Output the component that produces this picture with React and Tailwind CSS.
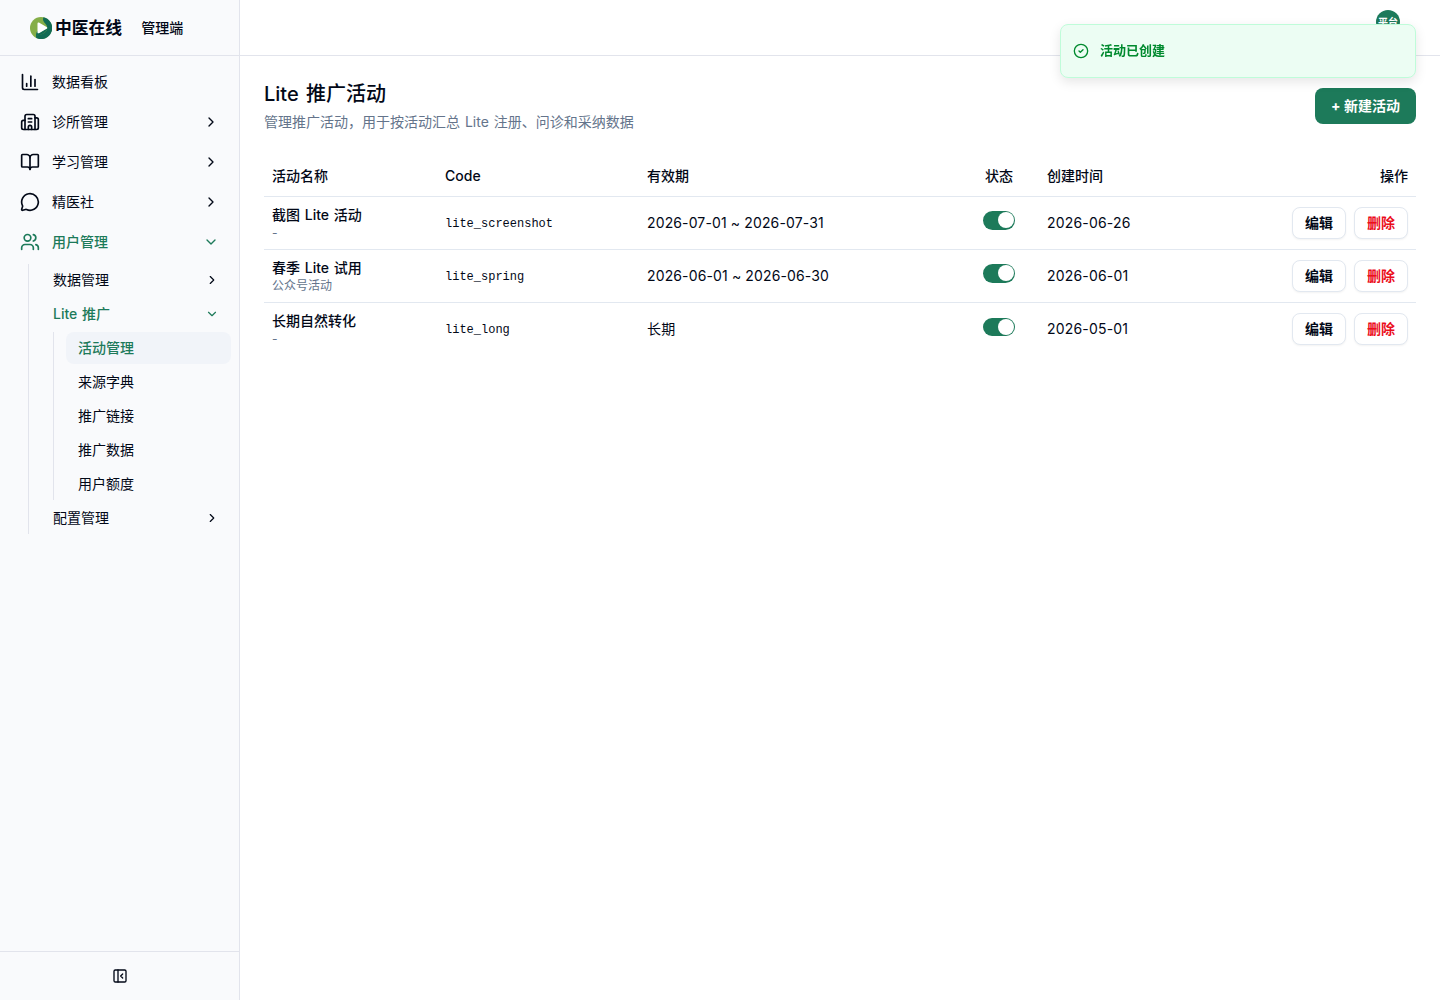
import React from "react";
import {
  ChartColumn,
  Building2,
  BookOpen,
  MessageCircle,
  Users,
  ChevronRight,
  ChevronDown,
  PanelLeftClose,
  CircleCheck,
} from "lucide-react";

const topItems = [
  { label: "数据看板", icon: ChartColumn },
  { label: "诊所管理", icon: Building2, more: true },
  { label: "学习管理", icon: BookOpen, more: true },
  { label: "精医社", icon: MessageCircle, more: true },
];

const liteItems = ["来源字典", "推广链接", "推广数据", "用户额度"];

const campaigns = [
  { name: "截图 Lite 活动", note: "-", code: "lite_screenshot", period: "2026-07-01 ~ 2026-07-31", created: "2026-06-26" },
  { name: "春季 Lite 试用", note: "公众号活动", code: "lite_spring", period: "2026-06-01 ~ 2026-06-30", created: "2026-06-01" },
  { name: "长期自然转化", note: "-", code: "lite_long", period: "长期", created: "2026-05-01" },
];

function Logo() {
  return (
    <svg width="22" height="22" viewBox="0 0 22 22" className="shrink-0">
      <circle cx="11" cy="11" r="11" fill="#85ae47" />
      <path d="M13.500 0.300A11 11 0 1 1 6.500 21C5.800 19.800 6 18.800 7 18.200C12 18 17.500 15 17.300 10.500C17 7.500 14 6 13.200 3.500C12.900 2.300 13 1 13.500 .3Z" fill="#126b54" />
      <path d="M6.500 21C5.600 18.500 5.900 16 7.500 14L9 16L17.300 11C17 15 12 18 7 18.500Z" fill="#126b54" />
      <path d="M7.500 6.400C7.500 5.600 8.200 5.200 8.900 5.600L16.600 10C17.400 10.400 17.400 11.400 16.600 11.800L8.900 16.200C8.200 16.600 7.500 16.200 7.500 15.400Z" fill="#fff" />
    </svg>
  );
}

function Sidebar() {
  return (
    <aside className="flex w-60 shrink-0 flex-col border-r border-[#e2e4ec] bg-[#f9fafc]">
      <div className="flex h-14 shrink-0 items-center border-b border-[#e2e4ec] pl-[30px]">
        <Logo />
        <span className="ml-[3px] text-[16.8px] font-semibold leading-6">中医在线</span>
        <span className="ml-[19px] text-sm font-medium">管理端</span>
      </div>
      <nav className="flex flex-1 flex-col px-2 pt-2 text-sm">
        {topItems.map(({ label, icon: Icon, more }) => (
          <div key={label} className="mb-1 flex h-9 items-center pl-3 pr-3">
            <Icon size={20} />
            <span className="ml-3 flex-1">{label}</span>
            {more && <ChevronRight size={16} />}
          </div>
        ))}
        <div className="flex h-9 items-center px-3 font-medium text-[#1d7a5a]">
          <Users size={20} />
          <span className="ml-3 flex-1">用户管理</span>
          <ChevronDown size={16} />
        </div>
        <div className="ml-5 mt-1 flex flex-col border-l border-[#e2e4ec] pl-3">
          <div className="flex h-8 items-center justify-between pl-3 pr-3">
            <span>数据管理</span>
            <ChevronRight size={14} />
          </div>
          <div className="mt-0.5 flex h-8 items-center justify-between pl-3 pr-3 font-medium text-[#1d7a5a]">
            <span className="[word-spacing:1px]">Lite 推广</span>
            <ChevronDown size={14} />
          </div>
          <div className="ml-3 mt-0.5 flex flex-col gap-0.5 border-l border-[#e2e4ec] pl-3">
            <div className="flex h-8 items-center rounded-lg bg-[#f1f4f9] pl-3 font-medium text-[#1d7a5a]">活动管理</div>
            {liteItems.map((label) => (
              <div key={label} className="flex h-8 items-center pl-3">{label}</div>
            ))}
          </div>
          <div className="mt-0.5 flex h-8 items-center justify-between pl-3 pr-3">
            <span>配置管理</span>
            <ChevronRight size={14} />
          </div>
        </div>
      </nav>
      <div className="flex h-[49px] shrink-0 items-center justify-center border-t border-[#e2e4ec]">
        <PanelLeftClose size={16} />
      </div>
    </aside>
  );
}

function Switch() {
  return (
    <span className="inline-flex h-[18.4px] w-8 items-center justify-end rounded-full bg-[#1d7a5a] pr-px align-middle">
      <span className="size-4 rounded-full bg-white" />
    </span>
  );
}

function RowButton({ children, danger }) {
  return (
    <button
      className={
        "h-8 w-[54px] rounded-lg border border-[#e2e8f0] bg-white text-sm font-bold shadow-xs " +
        (danger ? "text-[#eb0d1b]" : "")
      }
    >
      {children}
    </button>
  );
}

function CampaignTable() {
  return (
    <table className="mt-6 w-full table-fixed border-collapse text-sm">
      <colgroup>
        <col className="w-[173px]" />
        <col className="w-[202px]" />
        <col className="w-[320px]" />
        <col className="w-20" />
        <col className="w-[200px]" />
        <col />
      </colgroup>
      <thead>
        <tr className="h-10 border-b border-[#e2e8f0] text-left">
          <th className="px-2 font-medium">活动名称</th>
          <th className="px-2 font-medium">Code</th>
          <th className="px-2 font-medium">有效期</th>
          <th className="px-2 text-center font-medium">状态</th>
          <th className="px-2 font-medium">创建时间</th>
          <th className="px-2 text-right font-medium">操作</th>
        </tr>
      </thead>
      <tbody>
        {campaigns.map((c) => (
          <tr key={c.code} className="h-[53px] border-b border-[#e2e8f0] last:border-b-0">
            <td className="px-2">
              <div className="leading-5 font-medium [word-spacing:1px]">{c.name}</div>
              <div className="text-xs leading-4 text-[#64748b]">{c.note}</div>
            </td>
            <td className="px-2 pt-0.5 font-['Liberation_Mono',monospace] text-xs">{c.code}</td>
            <td className="px-2 tracking-[0.13px]">{c.period}</td>
            <td className="px-2 pb-1.5 text-center"><Switch /></td>
            <td className="px-2 tracking-[0.18px]">{c.created}</td>
            <td className="px-2">
              <div className="flex justify-end gap-2">
                <RowButton>编辑</RowButton>
                <RowButton danger>删除</RowButton>
              </div>
            </td>
          </tr>
        ))}
      </tbody>
    </table>
  );
}

export default function App() {
  return (
    <div className="flex h-screen overflow-hidden bg-white font-[Inter,'Noto_Sans_CJK_SC',sans-serif] text-[#020817]">
      <Sidebar />
      <div className="flex min-w-0 flex-1 flex-col">
        <header className="flex h-14 shrink-0 justify-end border-b border-[#e2e4ec] pr-10 pt-[10px]">
          <div className="flex size-6 items-center justify-center rounded-full bg-[#1d7a5a] text-[10px] font-semibold text-white">平台</div>
        </header>
        <main className="flex-1 p-6">
          <div className="flex h-[52px] items-center justify-between">
            <div className="flex flex-col gap-1 [word-spacing:1px]">
              <h1 className="text-xl font-medium leading-7 [word-spacing:2px]">Lite 推广活动</h1>
              <p className="text-sm text-[#64748b]">管理推广活动，用于按活动汇总 Lite 注册、问诊和采纳数据</p>
            </div>
            <button className="h-9 w-[101px] rounded-lg bg-[#1d7a5a] text-sm font-bold text-white">+ 新建活动</button>
          </div>
          <CampaignTable />
        </main>
      </div>
      <div className="fixed right-6 top-6 flex h-[54px] w-[356px] items-center gap-[11px] rounded-lg border border-[#bffcd9] bg-[#ecfdf3] pl-3 text-[13px] font-semibold text-[#008a2e] shadow-[0_4px_12px_rgba(0,0,0,0.1)]">
        <CircleCheck size={16} />
        <span>活动已创建</span>
      </div>
    </div>
  );
}
